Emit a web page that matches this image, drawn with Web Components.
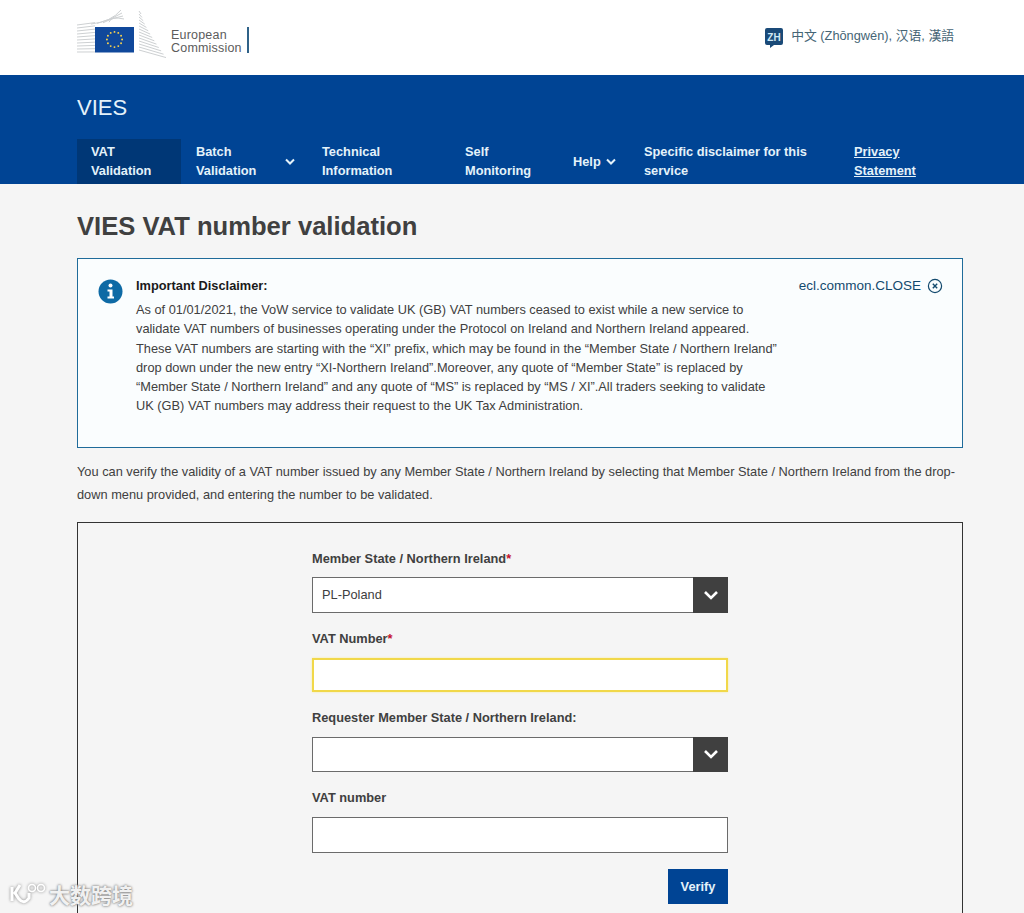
<!DOCTYPE html>
<html lang="en">
<head>
<meta charset="utf-8">
<title>VIES VAT number validation</title>
<style>
    html, body { margin: 0; height: 913px; overflow: hidden; background: #f5f5f5; }
    body { font-family: "Liberation Sans", Arial, sans-serif; color: #404040; }
</style>
</head>
<body>
<ec-header></ec-header>
<vies-bar>
    <nav-item w="104" active>VAT<br>Validation</nav-item>
    <nav-item w="127" pad="15" chevron="103">Batch<br>Validation</nav-item>
    <nav-item w="143">Technical<br>Information</nav-item>
    <nav-item w="108">Self<br>Monitoring</nav-item>
    <nav-item w="71" chevron="46" single>Help</nav-item>
    <nav-item w="210">Specific disclaimer for this<br>service</nav-item>
    <nav-item w="123" underline>Privacy<br>Statement</nav-item>
</vies-bar>
<vies-page>
    <info-box>
        <span slot="title">Important Disclaimer:</span>
        As of 01/01/2021, the VoW service to validate UK (GB) VAT numbers ceased to exist while a new service to<br>
        validate VAT numbers of businesses operating under the Protocol on Ireland and Northern Ireland appeared.<br>
        These VAT numbers are starting with the “XI” prefix, which may be found in the “Member State / Northern Ireland”<br>
        drop down under the new entry “XI-Northern Ireland”.Moreover, any quote of “Member State” is replaced by<br>
        “Member State / Northern Ireland” and any quote of “MS” is replaced by “MS / XI”.All traders seeking to validate<br>
        UK (GB) VAT numbers may address their request to the UK Tax Administration.
    </info-box>
    <vat-form></vat-form>
</vies-page>
<water-mark></water-mark>

<script>
class EcHeader extends HTMLElement{
    constructor(){
        super();
        this.attachShadow({mode: "open"});
    }
    connectedCallback(){
        let left = "";
        for(let i = 0; i < 10; i++){
            const y = 25 + i * 3;
            left += `<path d="M0 ${y} L18 ${y - 2.4 + i * .26}" />`;
        }
        // roof lines that run up behind the flag
        let roof = "";
        for(let i = 0; i < 4; i++){
            roof += `<path d="M${14 + i * 6} ${24 - i * .6} Q34 ${22 - i * 2} ${44 + i} ${10 + i * 3}" />`;
        }
        let wing = "";
        for(let i = 0; i < 14; i++){
            const y = 11 + i * 3;
            const end = 64 + Math.pow(i / 13, 1.3) * 25;
            wing += `<path d="M62 ${y} L${end} ${y + 3 + i * .35}" />`;
        }
        let stars = "";
        for(let i = 0; i < 12; i++){
            const a = i * Math.PI / 6;
            stars += `<circle cx="${37.5 + 7.6 * Math.cos(a)}" cy="${39.5 + 7.6 * Math.sin(a)}" r=".95" />`;
        }
        this.shadowRoot.innerHTML = `
        <style>
            :host {
                display: flex;
                justify-content: space-between;
                align-items: flex-start;
                height: 75px;
                padding: 0 70px 0 77px;
                background: #fff;
                box-sizing: border-box;
            }
            .logo { display: flex; }
            svg.mark { width: 92px; height: 60px; display: block; }
            .name {
                margin: 27px 0 0 2px;
                padding: 1px 5px 0 0;
                height: 25px;
                font-size: 12.5px;
                line-height: 13px;
                letter-spacing: .2px;
                color: #5c5c5c;
                border-right: 2px solid #2f6288;
            }
            .name span { position: relative; top: 1px; }
            .lang {
                display: flex;
                align-items: flex-start;
                gap: 8px;
                margin-top: 28px;
                font-size: 12.8px;
                line-height: 16px;
                color: #456575;
                font-family: "Liberation Sans", "Noto Sans CJK SC", sans-serif;
            }
            .zh { width: 18px; height: 20px; display: block; }
        </style>
        <div class="logo">
            <svg class="mark" viewBox="0 0 92 60">
                <g fill="none" stroke="#cdd0d2" stroke-width="1">${left}${roof}${wing}</g>
                <rect x="18" y="27" width="39" height="25.5" fill="#10489b" />
                <g fill="#ffd64a">${stars}</g>
            </svg>
            <div class="name"><span>European<br>Commission</span></div>
        </div>
        <div class="lang">
            <svg class="zh" viewBox="0 0 18 20">
                <path d="M2 0 H16 A2 2 0 0 1 18 2 V15 A2 2 0 0 1 16 17 H9 L5 20 V17 H2 A2 2 0 0 1 0 15 V2 A2 2 0 0 1 2 0 Z" fill="#1a4a78" />
                <text x="9" y="12.5" font-size="10" font-weight="700" text-anchor="middle" fill="#cfe8f5" font-family="Liberation Sans">ZH</text>
            </svg>
            <span>中文 (Zhōngwén), 汉语, 漢語</span>
        </div>`;
    }
}
customElements.define("ec-header", EcHeader);

class ViesBar extends HTMLElement{
    constructor(){
        super();
        this.attachShadow({mode: "open"});
        this.shadowRoot.innerHTML = `
        <style>
            :host {
                display: block;
                height: 109px;
                padding-left: 77px;
                background: #004494;
                color: #e4f2fa;
            }
            h2 {
                margin: 0;
                padding-top: 20px;
                height: 64px;
                box-sizing: border-box;
                font-size: 22px;
                line-height: 26px;
                font-weight: 400;
            }
            nav { display: flex; height: 45px; }
        </style>
        <h2>VIES</h2>
        <nav><slot></slot></nav>`;
    }
}
customElements.define("vies-bar", ViesBar);

class NavItem extends HTMLElement{
    constructor(){
        super();
        this.attachShadow({mode: "open"});
    }
    connectedCallback(){
        const chevron = this.getAttribute("chevron");
        this.style.width = this.getAttribute("w") + "px";
        this.style.paddingLeft = (this.getAttribute("pad") || 14) + "px";
        this.shadowRoot.innerHTML = `
        <style>
            :host {
                position: relative;
                display: flex;
                align-items: center;
                box-sizing: border-box;
                padding-bottom: 1px;
                font-size: 12.8px;
                font-weight: 700;
                line-height: 19px;
            }
            :host([active]) { background: #003776; padding-bottom: 2px; }
            :host([single]) { padding-bottom: 0; }
            :host([underline]) { text-decoration: underline; }
            svg { position: absolute; top: 19px; width: 12px; height: 8px; }
        </style>
        <div><slot></slot></div>
        ${chevron ? `<svg style="left:${chevron}px" viewBox="0 0 12 8"><path d="M2 1.5 L6 5.5 L10 1.5" fill="none" stroke="#e4f2fa" stroke-width="2" /></svg>` : ""}`;
    }
}
customElements.define("nav-item", NavItem);

class ViesPage extends HTMLElement{
    constructor(){
        super();
        this.attachShadow({mode: "open"});
        this.shadowRoot.innerHTML = `
        <style>
            :host { display: block; padding: 0 61px 0 77px; }
            h1 {
                margin: 0;
                padding-top: 26px;
                height: 74px;
                box-sizing: border-box;
                font-size: 25.6px;
                line-height: 32px;
                font-weight: 700;
                color: #404040;
            }
        </style>
        <h1>VIES VAT number validation</h1>
        <slot></slot>`;
    }
}
customElements.define("vies-page", ViesPage);

class InfoBox extends HTMLElement{
    constructor(){
        super();
        this.attachShadow({mode: "open"});
        this.shadowRoot.innerHTML = `
        <style>
            :host {
                display: flex;
                box-sizing: border-box;
                height: 190px;
                padding: 17px 19px 0 20px;
                border: 1px solid #1f6b9a;
                background: #fafdfe;
                font-size: 12.8px;
                line-height: 19.2px;
                color: #404040;
            }
            .icon { width: 25px; height: 25px; margin: 3px 13px 0 0; flex: none; }
            .body { flex: 1; min-width: 660px; white-space: nowrap; }
            .title { font-weight: 700; color: #1a1a1a; margin-bottom: 5px; }
            .close {
                display: flex;
                align-items: center;
                gap: 6px;
                height: 19px;
                font-size: 13.5px;
                color: #134a6e;
            }
            .close svg { width: 16px; height: 16px; }
        </style>
        <svg class="icon" viewBox="0 0 25 25">
            <circle cx="12.5" cy="12.5" r="12" fill="#0e6aa5" />
            <circle cx="12.5" cy="6.5" r="2" fill="#fff" />
            <path d="M9.5 10.5 H14.5 V17.5 H16 V19.5 H9.5 V17.5 H11.5 V12.5 H9.5 Z" fill="#fff" />
        </svg>
        <div class="body">
            <div class="title"><slot name="title"></slot></div>
            <slot></slot>
        </div>
        <div class="close">
            <span>ecl.common.CLOSE</span>
            <svg viewBox="0 0 16 16" fill="none" stroke="#134a6e">
                <circle cx="8" cy="8" r="6.6" stroke-width="1.2" />
                <path d="M5.8 5.8 L10.2 10.2 M10.2 5.8 L5.8 10.2" stroke-width="1.4" />
            </svg>
        </div>`;
    }
}
customElements.define("info-box", InfoBox);

class FormField extends HTMLElement{
    constructor(){
        super();
        this.attachShadow({mode: "open"});
    }
    connectedCallback(){
        const required = this.hasAttribute("required") ? `<span class="req">*</span>` : "";
        const select = this.hasAttribute("select");
        this.shadowRoot.innerHTML = `
        <style>
            :host { display: block; width: 416px; }
            label {
                display: block;
                height: var(--label, 29px);
                font-size: 12.8px;
                line-height: 19px;
                font-weight: 700;
                color: #404040;
            }
            .req { color: #c4122f; }
            .box {
                display: flex;
                box-sizing: border-box;
                height: var(--h, 36px);
                border: 1px solid #6b6b6b;
                background: #fff;
            }
            :host([focus]) .box { border: 2px solid #f1d84a; box-shadow: 0 0 2px #f7eb9c; }
            .value {
                flex: 1;
                padding-left: 9px;
                font-size: 12.8px;
                line-height: 33px;
                color: #404040;
            }
            .arrow {
                display: flex;
                align-items: center;
                justify-content: center;
                width: 35px;
                margin: -1px -1px -1px 0;
                background: #404040;
            }
            .arrow svg { width: 16px; height: 11px; }
        </style>
        <label>${this.getAttribute("label")}${required}</label>
        <div class="box">
            <div class="value">${this.getAttribute("value") || ""}</div>
            ${select ? `<div class="arrow"><svg viewBox="0 0 16 11"><path d="M2 2 L8 8 L14 2" fill="none" stroke="#fff" stroke-width="2.6" /></svg></div>` : ""}
        </div>`;
    }
}
customElements.define("form-field", FormField);

class VatForm extends HTMLElement{
    constructor(){
        super();
        this.attachShadow({mode: "open"});
        this.shadowRoot.innerHTML = `
        <style>
            :host { display: block; }
            p {
                margin: 0;
                padding-top: 12px;
                height: 74px;
                box-sizing: border-box;
                font-size: 12.8px;
                line-height: 23px;
                color: #404040;
            }
            .panel {
                box-sizing: border-box;
                height: 391px;
                padding: 26px 0 0 234px;
                border: 1px solid #333;
                border-bottom: 0;
                display: flex;
                flex-direction: column;
            }
            form-field { margin-bottom: 16px; }
            form-field.first { --label: 28px; }
            form-field.nv { --h: 34px; }
            form-field.rq { --h: 35px; }
            button {
                align-self: flex-start;
                margin: 0 0 0 356px;
                width: 60px;
                height: 35px;
                border: 0;
                padding: 0;
                background: #004494;
                color: #e4f2fa;
                font: 700 12.8px "Liberation Sans", Arial, sans-serif;
            }
        </style>
        <p>You can verify the validity of a VAT number issued by any Member State / Northern Ireland by selecting that Member State / Northern Ireland from the drop-down menu provided, and entering the number to be validated.</p>
        <div class="panel">
            <form-field class="first" select required label="Member State / Northern Ireland" value="PL-Poland"></form-field>
            <form-field class="nv" focus required label="VAT Number"></form-field>
            <form-field class="rq" select label="Requester Member State / Northern Ireland:"></form-field>
            <form-field label="VAT number"></form-field>
            <button>Verify</button>
        </div>`;
    }
}
customElements.define("vat-form", VatForm);

class WaterMark extends HTMLElement{
    constructor(){
        super();
        this.attachShadow({mode: "open"});
        this.shadowRoot.innerHTML = `
        <style>
            :host {
                position: absolute;
                left: 9px;
                top: 879px;
                display: flex;
                align-items: center;
                gap: 3px;
                color: rgba(255, 255, 255, .9);
                font: 700 21px "Noto Sans CJK SC", sans-serif;
                text-shadow: 0 0 3px #8a8a8a, 0 0 2px #8a8a8a;
            }
            svg { width: 37px; height: 24px; filter: drop-shadow(0 0 1.5px #888); }
        </style>
        <svg viewBox="0 0 37 24" fill="none" stroke="#fff" stroke-width="3">
            <path d="M3 5 V19 M11 3 L6 11 L10 17 Q15 23 20 16 V11" />
            <circle cx="23" cy="6" r="3.5" stroke-width="1.6" />
            <circle cx="32" cy="6" r="3.5" stroke-width="1.6" />
        </svg>
        <span>大数跨境</span>`;
    }
}
customElements.define("water-mark", WaterMark);
</script>
</body>
</html>
